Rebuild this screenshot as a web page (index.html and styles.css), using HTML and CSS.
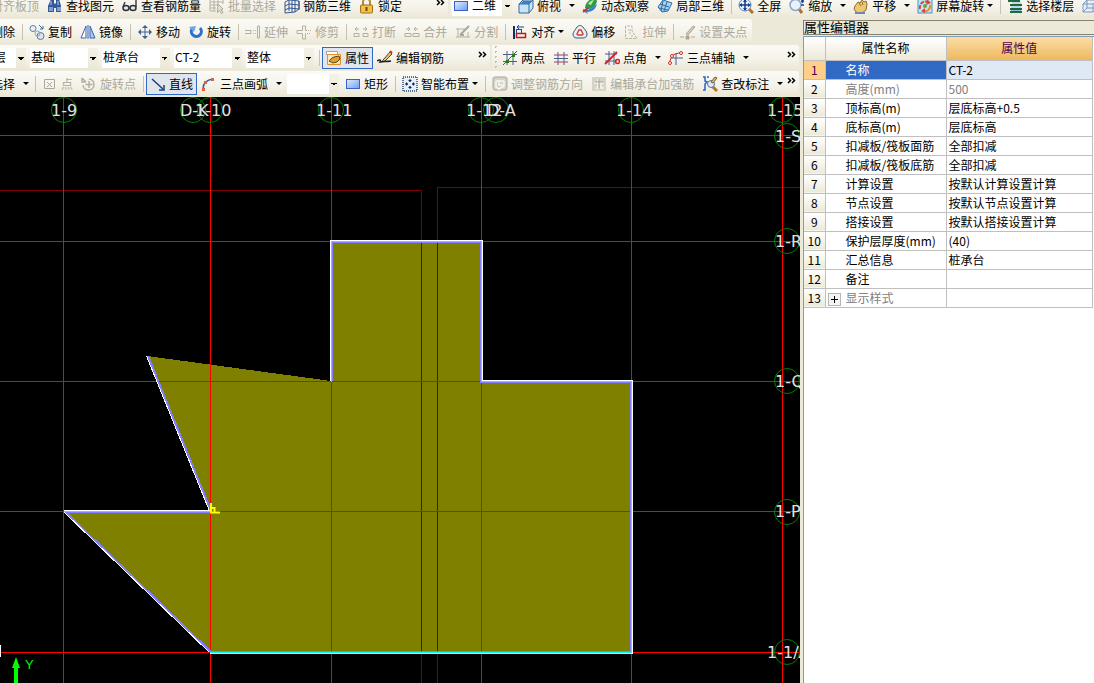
FILE: index.html
```html
<!DOCTYPE html>
<html lang="zh-CN">

<head>
    <meta charset="UTF-8">
    <meta name="viewport" content="width=device-width, initial-scale=1.0">
    <title>钢筋算量</title>
    <link rel="stylesheet" href="styles.css">
</head>

<body>
    <!-- 图标 -->
    <svg class="sprite" aria-hidden="true">
        <defs>
            <linearGradient id="blueFill" x1="0" y1="0" x2="1" y2="1">
                <stop offset="0" stop-color="#e4eeff" />
                <stop offset="1" stop-color="#6d9cf5" />
            </linearGradient>
        </defs>
        <symbol id="i-find" viewBox="0 0 16 16">
            <path d="M4 1h3v4l1 1 1-1V1h3l2 7v6H9v-4H7v4H1V8z" fill="#355a9c" />
            <path d="M2 9h4v4H2zM10 9h4v4h-4z" fill="#7f9fd0" />
            <path d="M4 3v4M11 3v4" stroke="#bcd0ee" />
        </symbol>
        <symbol id="i-look" viewBox="0 0 16 16">
            <path d="M3 4L1 9M14 2v7" stroke="#444" stroke-width="1.500" fill="none" />
            <ellipse cx="4" cy="10" rx="3" ry="2.5" fill="#dce6ee" stroke="#333" stroke-width="1.5" />
            <ellipse cx="11" cy="10" rx="3" ry="2.5" fill="#dce6ee" stroke="#333" stroke-width="1.5" />
        </symbol>
        <symbol id="i-batch" viewBox="0 0 16 16">
            <path d="M1 1h13v5M1 1v12h6M1 4h13M1 7h8M1 10h6M5 1v12M9 1v7" stroke="#b5b2a4" fill="none" />
            <path d="M9 6l5 5-2 .5 2 3-1.500 1-2-3-2 2z" fill="#e6e4da" stroke="#aaa799" />
        </symbol>
        <symbol id="i-rebar3d" viewBox="0 0 16 16">
            <path d="M1 4l4-2 10 1M1 4v11l10-1 4-3V3M1 8l4-2 10 1M1 12l4-2 10 1M5 2v11M8 3v11M11 3v11M15 3v9" stroke="#33558f" fill="none" />
        </symbol>
        <symbol id="i-lock" viewBox="0 0 16 16">
            <path d="M4 8V4a3.500 3.500 0 0 1 7 0v4" stroke="#b08a3e" stroke-width="2" fill="none" />
            <rect x="1.500" y="7" width="12" height="8" rx="1" fill="#f3bf45" stroke="#a36f18" />
            <path d="M7.500 9v4" stroke="#6e4a10" stroke-width="2" />
        </symbol>
        <symbol id="i-rect" viewBox="0 0 16 16">
            <rect x="1.500" y="3.500" width="13" height="9" fill="url(#blueFill)" stroke="#3563c6" />
        </symbol>
        <symbol id="i-cube" viewBox="0 0 16 16">
            <path d="M1 6l4-4h10v8l-4 5H1z" fill="#c7e4f6" stroke="#34699a" />
            <path d="M1 6h10v9M11 6l4-4" fill="none" stroke="#34699a" />
            <path d="M2 6l3-3h9l-3 3z" fill="#3a82b8" />
        </symbol>
        <symbol id="i-orbit" viewBox="0 0 16 16">
            <path d="M3 10C3 5 8 0 13 0c3 2 2 6-1 9-3 2-6 3-9 1z" fill="#2e9b47" />
            <path d="M6 6c2-3 4-4 6-4l-3 5z" fill="#b5ec9c" />
            <path d="M1 11c4 2 9 0 14-5-1 5-5 8-10 8l1 2-5-3z" fill="#3b78d8" />
            <path d="M1 14l5-4" stroke="#c33" stroke-width="2" />
        </symbol>
        <symbol id="i-part3d" viewBox="0 0 16 16">
            <path d="M1 9l5-7 9 3-4 8-6 1z" fill="#a9d2f2" stroke="#2f6ba7" />
            <path d="M3 6l9 3M6 3l-2 10M10 4l-3 9M2 10l9 2" stroke="#2f6ba7" fill="none" />
        </symbol>
        <symbol id="i-full" viewBox="0 0 16 16">
            <path d="M11 11l4 4" stroke="#b3702d" stroke-width="3" />
            <circle cx="7" cy="7" r="6" fill="#e3efff" stroke="#5b84bd" />
            <path d="M7 2v10M2 7h10" stroke="#1b3f8a" stroke-width="1.500" />
            <path d="M7 1l2 3H5zM7 13l2-3H5zM1 7l3-2v4zM13 7l-3-2v4z" fill="#1b3f8a" />
        </symbol>
        <symbol id="i-zoom" viewBox="0 0 16 16">
            <path d="M10 11l3 4" stroke="#b3702d" stroke-width="3" />
            <circle cx="6.500" cy="7" r="5.500" fill="#e9f2fc" stroke="#8aa6c8" stroke-width="1.500" />
            <path d="M12 3h3M12 7h3M13.500 1v4" stroke="#1b3f8a" stroke-width="1.500" />
        </symbol>
        <symbol id="i-pan" viewBox="0 0 16 16">
            <path d="M2 8l3-4 2 1 2-3 2 2 2-1 1 3-1 6-4 3H4L1 11z" fill="#f0c76e" stroke="#8e6c2d" />
            <path d="M6 5l2 3M9 4l1 3" stroke="#8e6c2d" />
            <path d="M2 15h10" stroke="#6f86b3" stroke-width="2" />
        </symbol>
        <symbol id="i-screen" viewBox="0 0 16 16">
            <rect x="1" y="1" width="14" height="14" fill="#bfe5f6" stroke="#4a91c4" />
            <path d="M3 11C2 6 6 2 11 4" stroke="#e04430" stroke-width="2" fill="none" stroke-dasharray="4 1" />
            <path d="M10 1l4 4-5 2z" fill="#e04430" />
            <path d="M13 7c1 4-3 7-6 6" stroke="#f0882c" stroke-width="2" fill="none" />
            <path d="M8 10v5l-4-2z" fill="#e04430" />
            <circle cx="8" cy="8" r="2" fill="#58a858" />
        </symbol>
        <symbol id="i-floors" viewBox="0 0 16 16">
            <path d="M1 3h12M3 7h12M3 11h12M3 14h12" stroke="#1d6b38" stroke-width="2" />
            <path d="M5 5h9M4 9h10M4 12.500h10" stroke="#8fbbe2" />
        </symbol>
        <symbol id="i-wire" viewBox="0 0 16 16">
            <path d="M1 6l4-4h10v8l-4 4H1zM1 6h10v8M11 6l4-4M5 2v8h10M5 10l-4 4" fill="#e3eefb" stroke="#7c97bd" />
        </symbol>
        <symbol id="i-delete" viewBox="0 0 16 16">
            <path d="M3 3l10 10M13 3L3 13" stroke="#c22" stroke-width="2" />
        </symbol>
        <symbol id="i-copy" viewBox="0 0 16 16">
            <circle cx="4" cy="4.500" r="3" fill="#eef2f8" stroke="#61789d" />
            <circle cx="11.500" cy="12" r="3.500" fill="#dbe4f2" stroke="#61789d" />
            <circle cx="8.500" cy="9.500" r="2.500" fill="none" stroke="#8da0bd" />
            <path d="M10 1l4 4M14 2v3h-3" stroke="#3b6ca5" fill="none" />
        </symbol>
        <symbol id="i-mirror" viewBox="0 0 16 16">
            <path d="M6 2v12H1z" fill="#fff" stroke="#3c64b2" />
            <path d="M10 2v12h5z" fill="#a9c6f5" stroke="#3c64b2" />
            <path d="M8 1v14" stroke="#3c64b2" />
        </symbol>
        <symbol id="i-move" viewBox="0 0 16 16">
            <path d="M8 2v12M2 8h12" stroke="#3d6290" />
            <path d="M8 1l3 3H5zM8 15l3-3H5zM1 8l3-3v6zM15 8l-3-3v6z" fill="#3d6290" />
        </symbol>
        <symbol id="i-rotate" viewBox="0 0 16 16">
            <path d="M12 4a5 5 0 1 1-8 1" stroke="#2e6fd2" stroke-width="3" fill="none" />
            <path d="M1 3l7-1-2 6z" fill="#6fa5ee" />
        </symbol>
        <symbol id="i-extend" viewBox="0 0 16 16">
            <path d="M0 6.500h6v3H0M8 6.500h1M8 9.500h1M10 6.500h1M10 9.500h1M12.500 2v12h2V2z" stroke="#b3b0a2" fill="none" />
        </symbol>
        <symbol id="i-trim" viewBox="0 0 16 16">
            <path d="M6.500 2v4.500H1v3h5.500V15h3V9.500M9.500 2v4.500H11M12 6.500h1M14 6.500h1M11 9.500h1M13 9.500h1M6.500 2h3" stroke="#b3b0a2" fill="none" />
        </symbol>
        <symbol id="i-break" viewBox="0 0 16 16">
            <path d="M1 9.500h5v3H1zM10 9.500h5v3h-5zM2 5h4M4 3L2 5l2 2M10 5h4M12 3l2 2-2 2" stroke="#b3b0a2" fill="none" />
        </symbol>
        <symbol id="i-merge" viewBox="0 0 16 16">
            <path d="M1 9.500h6v3H1zM9 9.500h6v3H9zM2 5h4M4 3l2 2-2 2M10 5h4M12 3l-2 2 2 2" stroke="#b3b0a2" fill="none" />
        </symbol>
        <symbol id="i-split" viewBox="0 0 16 16">
            <path d="M1 5h9M1 13h14M3 5v8M13 8v5" stroke="#b3b0a2" fill="none" />
            <path d="M5 11l9-9M5 11l4 0" stroke="#aaa799" stroke-width="2" />
        </symbol>
        <symbol id="i-align" viewBox="0 0 16 16">
            <path d="M2 2v13" stroke="#10305e" stroke-width="2" />
            <rect x="4.500" y="5.500" width="5" height="4" fill="none" stroke="#1c3fb4" />
            <rect x="4.500" y="9.500" width="9" height="4" fill="none" stroke="#c01a1a" stroke-width="1.500" />
            <path d="M12 3H5M7 1L5 3l2 2" stroke="#1c3fb4" fill="none" />
        </symbol>
        <symbol id="i-offset" viewBox="0 0 16 16">
            <path d="M5 3c2-2 4-2 6 0 1 2 4 4 4 7s-2 4-4 4H5c-3 0-4-2-4-4s3-5 4-7z" fill="#e6edf5" stroke="#385878" />
            <path d="M7 6h2l2 4-1 1H6l-1-1z" fill="#fff" stroke="#d04030" stroke-width="1.500" />
        </symbol>
        <symbol id="i-stretch" viewBox="0 0 16 16">
            <path d="M2.500 2v12.500H14L9 7V2zM5 6h3M6 9h2M8 12h2" stroke="#b9b6a9" fill="none" stroke-dasharray="3 1" />
        </symbol>
        <symbol id="i-grip" viewBox="0 0 16 16">
            <path d="M0 13h4M11 13h4M6 12h3v3H6z" stroke="#aaa799" fill="#aaa799" />
            <path d="M6 10l7-8 2 1-7 8z" fill="#d0cdc0" stroke="#aaa799" />
        </symbol>
        <symbol id="i-props" viewBox="0 0 16 16">
            <path d="M.5 1.500h11v3H.5z" fill="#fff" stroke="#a3a3a3" />
            <path d="M1.500 4.500h13v10h-13z" fill="#fbe5c4" stroke="#e98f28" />
            <path d="M3 11l3-3 2-1 5-1 1 3-3 3-4 1z" fill="#d9a62b" stroke="#5c471b" />
        </symbol>
        <symbol id="i-pen" viewBox="0 0 16 16">
            <path d="M6 10l7-8 2 2-7 7-3 1z" fill="#e7c46a" stroke="#5a4630" />
            <path d="M13 1l2 2" stroke="#c0392b" stroke-width="2" />
            <path d="M0 11c3-2 4-1 3 1 3-1 6 0 11-1" stroke="#222" stroke-width="1.500" fill="none" />
        </symbol>
        <symbol id="i-two" viewBox="0 0 16 16">
            <path d="M5 1v14M11 1v14M1 4.500h14M1 11.500h14" stroke="#4a5c92" />
            <path d="M1 15L15 1" stroke="#d02a20" />
            <path d="M4 10h3v3H4zM10 4h3v3h-3z" fill="#2b7a1c" />
        </symbol>
        <symbol id="i-parallel" viewBox="0 0 16 16">
            <path d="M5 2v13M11 2v13" stroke="#4a5c92" />
            <path d="M1 5h14M1 12h14" stroke="#a04060" />
            <path d="M1 8.500h14" stroke="#4a5c92" />
        </symbol>
        <symbol id="i-angle" viewBox="0 0 16 16">
            <path d="M5 1v14M10 1v14M1 4h12M1 11h12" stroke="#4a5c92" />
            <path d="M1 14L13 2" stroke="#e02020" stroke-width="2" />
            <circle cx="13.500" cy="11.500" r="2" fill="none" stroke="#e02020" stroke-width="1.500" />
        </symbol>
        <symbol id="i-axis3" viewBox="0 0 16 16">
            <path d="M8 3v12M3 8h12" stroke="#4a5c92" />
            <path d="M2 13c0-6 3-10 11-10" stroke="#d02a20" fill="none" />
            <circle cx="2" cy="13" r="1.500" fill="#fff" stroke="#d02a20" />
            <circle cx="4" cy="6" r="1.500" fill="#fff" stroke="#d02a20" />
            <circle cx="13" cy="3" r="1.500" fill="#fff" stroke="#d02a20" />
        </symbol>
        <symbol id="i-point" viewBox="0 0 16 16">
            <path d="M2.500 3.500h10v9h-10zM5 6l5 5M10 6l-5 5" stroke="#aaa799" fill="none" />
        </symbol>
        <symbol id="i-rotpoint" viewBox="0 0 16 16">
            <path d="M1 2v4h4M5 6L1 2M8 3a5.500 5.500 0 1 1-6 6M8 5v7M4.500 8.500h7" stroke="#b3b0a2" stroke-width="1.500" fill="none" />
        </symbol>
        <symbol id="i-line" viewBox="0 0 16 16">
            <path d="M2 3l11 10" stroke="#1c3f78" stroke-width="1.500" />
            <path d="M14 9v5H9" stroke="#1c3f78" stroke-width="1.500" fill="none" />
        </symbol>
        <symbol id="i-arc" viewBox="0 0 16 16">
            <path d="M2 13c0-5 3-9 10-10" stroke="#3a5fa0" stroke-width="1.500" fill="none" />
            <path d="M1 12h3v3H1zM3 5h3v3H3zM10 2h3v3h-3z" fill="#e0603a" />
        </symbol>
        <symbol id="i-smart" viewBox="0 0 16 16">
            <rect x="1" y="1" width="14" height="14" fill="#e6effb" stroke="#24466f" stroke-width="1.500" stroke-dasharray="1 1" />
            <path d="M8 3v3M8 10v3M3 8h3M10 8h3" stroke="#102c50" />
            <path d="M6 4h4L8 6zM6 12h4l-2-2zM4 6v4l2-2zM12 6v4l-2-2z" fill="#102c50" />
        </symbol>
        <symbol id="i-dir" viewBox="0 0 16 16">
            <rect x="1" y="1" width="14" height="13" rx="2" fill="#d6d3c7" stroke="#aaa799" />
            <path d="M4 5h8M4 5v6l3 2 5-3V5M7 5v4h4" stroke="#f8f7f1" stroke-width="1.500" fill="none" />
        </symbol>
        <symbol id="i-strong" viewBox="0 0 16 16">
            <rect x="1" y="1" width="14" height="14" fill="#d6d3c7" />
            <path d="M7 3v8l-2 2M3 7h10M10 8v4h3" stroke="#f8f7f1" stroke-width="1.500" fill="none" />
            <path d="M8 3v9M4 6h9" stroke="#aaa799" />
        </symbol>
        <symbol id="i-check" viewBox="0 0 16 16">
            <path d="M1 1h2v4l2 1-2 2v6H1M5 1h2" stroke="#2b62c0" stroke-width="1.500" fill="none" />
            <path d="M10 10l5 5" stroke="#b5722c" stroke-width="3" />
            <circle cx="9" cy="8" r="3.500" fill="#dbeaf8" stroke="#58759c" />
            <path d="M9 6l4-5 2 1-4 5z" fill="#e9bc55" stroke="#7b5b20" />
        </symbol>
        <symbol id="i-more" viewBox="0 0 9 7">
            <path d="M1 1l2.500 2.500L1 6M5 1l2.500 2.500L5 6" stroke="#000" stroke-width="1.500" fill="none" />
        </symbol>
    </svg>

    <!-- 第一行工具栏 -->
    <div class="bar-row top-row">
        <div class="toolbar scrolled">
            <button class="tool" disabled><svg><use href="#i-align" /></svg>对齐板顶</button>
            <button class="tool"><svg><use href="#i-find" /></svg>查找图元</button>
            <button class="tool"><svg><use href="#i-look" /></svg>查看钢筋量</button>
            <button class="tool" disabled><svg><use href="#i-batch" /></svg>批量选择</button>
            <button class="tool"><svg><use href="#i-rebar3d" /></svg>钢筋三维</button>
            <button class="tool"><svg><use href="#i-lock" /></svg>锁定</button>
            <button class="more" aria-label="更多"><svg><use href="#i-more" /></svg></button>
        </div>
        <div class="toolbar">
            <div class="view-box">
                <svg><use href="#i-rect" /></svg>
                <select class="combo view" aria-label="视图"><option>二维</option></select>
            </div>
            <button class="tool"><svg><use href="#i-cube" /></svg>俯视</button>
            <button class="drop" aria-label="俯视选项"></button>
            <button class="tool"><svg><use href="#i-orbit" /></svg>动态观察</button>
            <button class="tool"><svg><use href="#i-part3d" /></svg>局部三维</button>
            <span class="sep"></span>
            <button class="tool"><svg><use href="#i-full" /></svg>全屏</button>
            <button class="tool"><svg><use href="#i-zoom" /></svg>缩放</button>
            <button class="drop" aria-label="缩放选项"></button>
            <button class="tool"><svg><use href="#i-pan" /></svg>平移</button>
            <button class="drop" aria-label="平移选项"></button>
            <button class="tool has-arrow"><svg><use href="#i-screen" /></svg>屏幕旋转</button>
            <span class="sep"></span>
            <button class="tool"><svg><use href="#i-floors" /></svg>选择楼层</button>
            <button class="tool" aria-label="线框"><svg><use href="#i-wire" /></svg></button>
        </div>
    </div>

    <div class="workspace">
        <main>
            <!-- 修改工具栏 -->
            <div class="bar-row">
                <div class="toolbar scrolled">
                    <button class="tool"><svg><use href="#i-delete" /></svg>删除</button>
                    <span class="sep"></span>
                    <button class="tool"><svg><use href="#i-copy" /></svg>复制</button>
                    <button class="tool"><svg><use href="#i-mirror" /></svg>镜像</button>
                    <span class="sep"></span>
                    <button class="tool"><svg><use href="#i-move" /></svg>移动</button>
                    <button class="tool"><svg><use href="#i-rotate" /></svg>旋转</button>
                    <span class="sep"></span>
                    <button class="tool" disabled><svg><use href="#i-extend" /></svg>延伸</button>
                    <button class="tool" disabled><svg><use href="#i-trim" /></svg>修剪</button>
                    <span class="sep"></span>
                    <button class="tool" disabled><svg><use href="#i-break" /></svg>打断</button>
                    <button class="tool" disabled><svg><use href="#i-merge" /></svg>合并</button>
                    <button class="tool" disabled><svg><use href="#i-split" /></svg>分割</button>
                    <span class="sep"></span>
                    <button class="tool has-arrow"><svg><use href="#i-align" /></svg>对齐</button>
                    <button class="tool"><svg><use href="#i-offset" /></svg>偏移</button>
                    <button class="tool" disabled><svg><use href="#i-stretch" /></svg>拉伸</button>
                    <span class="sep"></span>
                    <button class="tool" disabled><svg><use href="#i-grip" /></svg>设置夹点</button>
                </div>
            </div>

            <!-- 构件选择 -->
            <div class="bar-row">
                <div class="toolbar combos">
                    <select class="combo floor" aria-label="楼层"><option>基础层</option></select>
                    <select class="combo" aria-label="构件类型"><option>基础</option></select>
                    <select class="combo" aria-label="构件"><option>桩承台</option></select>
                    <select class="combo" aria-label="构件名称"><option>CT-2</option></select>
                    <select class="combo" aria-label="单元"><option>整体</option></select>
                    <span class="sep"></span>
                    <button class="tool active"><svg><use href="#i-props" /></svg>属性</button>
                    <button class="tool"><svg><use href="#i-pen" /></svg>编辑钢筋</button>
                    <button class="more" aria-label="更多"><svg><use href="#i-more" /></svg></button>
                </div>
                <div class="toolbar grow grip">
                    <button class="tool"><svg><use href="#i-two" /></svg>两点</button>
                    <button class="tool"><svg><use href="#i-parallel" /></svg>平行</button>
                    <button class="tool"><svg><use href="#i-angle" /></svg>点角</button>
                    <button class="drop" aria-label="点角选项"></button>
                    <button class="tool"><svg><use href="#i-axis3" /></svg>三点辅轴</button>
                    <button class="drop" aria-label="三点辅轴选项"></button>
                    <button class="more" aria-label="更多"><svg><use href="#i-more" /></svg></button>
                </div>
            </div>

            <!-- 绘图工具栏 -->
            <div class="bar-row">
                <div class="toolbar scrolled grow">
                    <button class="tool"><svg><use href="#i-line" /></svg>选择</button>
                    <button class="drop" aria-label="选择选项"></button>
                    <span class="sep"></span>
                    <button class="tool" disabled><svg><use href="#i-point" /></svg>点</button>
                    <button class="tool" disabled><svg><use href="#i-rotpoint" /></svg>旋转点</button>
                    <span class="sep"></span>
                    <button class="tool active"><svg><use href="#i-line" /></svg>直线</button>
                    <button class="tool"><svg><use href="#i-arc" /></svg>三点画弧</button>
                    <button class="drop" aria-label="画弧选项"></button>
                    <select class="combo short" aria-label="画弧参数"><option></option></select>
                    <button class="tool"><svg><use href="#i-rect" /></svg>矩形</button>
                    <span class="sep"></span>
                    <button class="tool has-arrow"><svg><use href="#i-smart" /></svg>智能布置</button>
                    <span class="sep"></span>
                    <button class="tool" disabled><svg><use href="#i-dir" /></svg>调整钢筋方向</button>
                    <button class="tool" disabled><svg><use href="#i-strong" /></svg>编辑承台加强筋</button>
                    <button class="tool"><svg><use href="#i-check" /></svg>查改标注</button>
                    <button class="drop" aria-label="标注选项"></button>
                    <button class="more" aria-label="更多"><svg><use href="#i-more" /></svg></button>
                </div>
            </div>

            <!-- 绘图区 -->
            <svg class="drawing" viewBox="0 97 800 586" preserveAspectRatio="xMinYMin slice">
                <polygon class="slab" points="64,512 210,512 147,356 331,381 331,241 482,241 482,381 632,381 632,653 210,653" />

                <path class="sub-axis" d="M0 190.500H421.500V683M800 187.500H437.500V683" />
                <path class="axis" d="M63.500 97V683M210.500 97V683M331.500 97V683M481.500 97V683M631.500 97V683M782.500 97V683" />
                <path class="axis" d="M0 135.500H800M0 241.500H800M0 381.500H800M0 511.500H800M0 652.500H800" />

                <!-- 承台边线 -->
                <path class="edge inner" d="M64 512.500H210M332.500 381V242.500H480.500V382.500H630.500V651.500H210" />
                <path class="edge inner slope" d="M148 356L211 511M65.500 512L210.500 651.500" />
                <path class="edge mid" d="M64 511.500H210M331.500 382V241.500H481.500V381.500H631.500V652.500H210" />
                <path class="edge outer" d="M64 510.500H210M330.500 381V240.500H482.500V380.500H632.500V653.500H210" />
                <path class="edge outer" d="M146.500 356L209.500 511M64.500 512.500L209.500 652.500" />

                <g class="bubble">
                    <circle cx="64" cy="110" r="12.500" />
                    <circle cx="193" cy="110" r="12.500" />
                    <circle cx="210" cy="110" r="12.500" />
                    <circle cx="331" cy="110" r="12.500" />
                    <circle cx="481" cy="110" r="12.500" />
                    <circle cx="496" cy="110" r="12.500" />
                    <circle cx="631" cy="110" r="12.500" />
                    <circle cx="782" cy="110" r="12.500" />
                    <circle cx="787" cy="136" r="12.500" />
                    <circle cx="787" cy="241" r="12.500" />
                    <circle cx="787" cy="381" r="12.500" />
                    <circle cx="787" cy="512" r="12.500" />
                    <circle cx="787" cy="652" r="12.500" />
                </g>
                <g class="axis-name">
                    <text x="51" y="116">1-9</text>
                    <text x="180" y="116">D-K</text>
                    <text x="195" y="116">1-10</text>
                    <text x="316" y="116">1-11</text>
                    <text x="466" y="116">1-12</text>
                    <text x="487" y="116">D-A</text>
                    <text x="616" y="116">1-14</text>
                    <text x="767" y="116">1-15</text>
                    <text x="775" y="142">1-S</text>
                    <text x="775" y="247">1-R</text>
                    <text x="775" y="387">1-Q</text>
                    <text x="775" y="517">1-P</text>
                    <text x="767" y="658">1-1/A</text>
                </g>
                <path d="M0 645h1v12H0z" fill="#fff" />

                <!-- 插入点和坐标轴 -->
                <path d="M211 503V513M212 508H214.500V512M210 512.500H220" stroke="#ff0" stroke-width="2" fill="none" />
                <path d="M16 657l4 11h-2v15h-4v-15h-2z" fill="#0f0" />
                <text class="ucs" x="25" y="669">Y</text>
            </svg>
        </main>

        <!-- 属性编辑器 -->
        <aside>
            <h2>属性编辑器</h2>
            <div class="sheet">
                <table>
                    <thead>
                        <tr><th class="no"></th><th>属性名称</th><th class="current">属性值</th></tr>
                    </thead>
                    <tbody>
                        <tr class="selected"><th>1</th><td>名称</td><td>CT-2</td></tr>
                        <tr class="locked"><th>2</th><td>高度(mm)</td><td>500</td></tr>
                        <tr><th>3</th><td>顶标高(m)</td><td>层底标高+0.5</td></tr>
                        <tr><th>4</th><td>底标高(m)</td><td>层底标高</td></tr>
                        <tr><th>5</th><td>扣减板/筏板面筋</td><td>全部扣减</td></tr>
                        <tr><th>6</th><td>扣减板/筏板底筋</td><td>全部扣减</td></tr>
                        <tr><th>7</th><td>计算设置</td><td>按默认计算设置计算</td></tr>
                        <tr><th>8</th><td>节点设置</td><td>按默认节点设置计算</td></tr>
                        <tr><th>9</th><td>搭接设置</td><td>按默认搭接设置计算</td></tr>
                        <tr><th>10</th><td>保护层厚度(mm)</td><td>(40)</td></tr>
                        <tr><th>11</th><td>汇总信息</td><td>桩承台</td></tr>
                        <tr><th>12</th><td>备注</td><td></td></tr>
                        <tr class="locked group"><th>13</th><td><button class="expand" aria-label="展开"></button>显示样式</td><td></td></tr>
                    </tbody>
                </table>
            </div>
        </aside>
    </div>
</body>

</html>
```
FILE: styles.css
```css
* {
    box-sizing: border-box;
}

body {
    display: flex;
    flex-direction: column;
    height: 100vh;
    margin: 0;
    overflow: hidden;
    background-color: #ece9d8;
    color: #000;
    font-family: "Noto Sans CJK SC", sans-serif;
    font-size: 12px;
    line-height: 16px;
}

button,
select {
    font: inherit;
    color: inherit;
}

.sprite {
    position: absolute;
    width: 0;
    height: 0;
}

/* 工具栏 */
.bar-row {
    display: flex;
    gap: 2px;
    flex: none;
    height: 26px;
    overflow: hidden;
}

.top-row {
    margin-top: -7px;
}

.toolbar {
    display: flex;
    align-items: center;
    flex: none;
    height: 25px;
    padding-right: 1px;
    background: linear-gradient(#fbfaf6, #f4f2e8 60%, #ebe7d7);
    border-radius: 0 3px 3px 0;
}

.toolbar.scrolled {
    margin-left: -32px;
}

.toolbar.combos {
    margin-left: -44px;
}

.toolbar.grow {
    flex: 1;
    margin-right: 4px;
}

.toolbar.grip {
    padding-left: 6px;
    background: radial-gradient(circle, #c1beb0 1px, transparent 1px) 1px 4px / 5px 5px repeat-y,
        linear-gradient(#fbfaf6, #f4f2e8 60%, #ebe7d7);
}

.tool {
    display: flex;
    align-items: center;
    flex: none;
    gap: 3px;
    height: 22px;
    padding: 0 4px;
    border: 0;
    background: none;
    white-space: nowrap;
}

.tool svg {
    width: 16px;
    height: 16px;
}

.tool:disabled {
    color: #aca899;
}

.tool.active {
    background-color: #e1e6ec;
    box-shadow: inset 0 0 0 1px #316ac5;
}

.has-arrow::after,
.drop::after {
    content: "";
    border: 3px solid transparent;
    border-width: 3px 3px 0;
    border-top-color: #000;
}

.drop {
    display: flex;
    align-items: center;
    justify-content: center;
    flex: none;
    width: 13px;
    height: 22px;
    padding: 0;
    border: 0;
    background: none;
}

.more {
    align-self: flex-start;
    flex: none;
    margin: 6px 0 0 auto;
    padding: 0 2px 0 30px;
    border: 0;
    background: none;
    line-height: 0;
}

.scrolled.grow .more {
    padding-left: 0;
}

.more svg {
    width: 9px;
    height: 7px;
}

.sep {
    flex: none;
    width: 1px;
    height: 16px;
    margin: 0 2px 0 3px;
    background-color: #c5c2b4;
}

.combo {
    flex: none;
    width: 68px;
    height: 20px;
    margin: 0 2px;
    padding: 0 12px 2px 1px;
    border: 0;
    appearance: none;
    background: linear-gradient(45deg, transparent 50%, #000 50%) right 5px top 9px / 3px 3px no-repeat,
        linear-gradient(315deg, transparent 50%, #000 50%) right 2px top 9px / 3px 3px no-repeat,
        linear-gradient(#f4f2e8, #ece9d8) right / 10px 100% no-repeat,
        #fff;
}

.combo.floor {
    padding-left: 12px;
}

.combo.short {
    width: 52px;
}

.view-box {
    display: flex;
    align-items: center;
    width: 60px;
    height: 20px;
    margin: 0 2px;
    background-color: #fff;
}

.view-box svg {
    flex: none;
    width: 16px;
    height: 16px;
    margin-left: 1px;
}

.combo.view {
    width: 43px;
    margin: 0;
    padding-left: 3px;
}

/* 工作区 */
.workspace {
    display: flex;
    flex: 1;
    min-height: 0;
}

main {
    display: flex;
    flex-direction: column;
    flex: 1;
    min-width: 0;
}

.drawing {
    flex: 1;
    min-height: 0;
    margin-right: 3px;
    background-color: #000;
}

.slab {
    fill: #808000;
    shape-rendering: crispEdges;
}

.axis,
.sub-axis,
.edge {
    fill: none;
    shape-rendering: crispEdges;
}

.axis {
    stroke: #f00;
}

.sub-axis {
    stroke: #800000;
}

.edge.inner {
    stroke: #8080ff;
}

.edge.slope {
    stroke-width: 2px;
}

.edge.mid {
    stroke: #0ff;
}

.edge.outer {
    stroke: #fff;
}

.bubble {
    fill: none;
    stroke: #008000;
}

.axis-name {
    fill: #e0e0e0;
    font-family: "DejaVu Sans", sans-serif;
    font-size: 16px;
}

.ucs {
    fill: #0f0;
    font-family: "Liberation Sans", sans-serif;
    font-size: 13px;
}

/* 属性编辑器 */
aside {
    display: flex;
    flex-direction: column;
    flex: none;
    width: 291px;
    padding-top: 1px;
}

aside h2 {
    height: 15px;
    margin: 0;
    border: 1px solid #85836f;
    border-width: 1px 0 1px 1px;
    font-size: 13px;
    font-weight: normal;
    line-height: 12px;
}

.sheet {
    flex: 1;
    margin-top: 1px;
    border: 1px solid #7f9db9;
    border-width: 1px 0 0 1px;
    background-color: #fff;
}

table {
    width: 289px;
    border-collapse: collapse;
    table-layout: fixed;
}

th,
td {
    height: 19px;
    padding: 0 2px;
    border: 1px solid #c0c0c0;
    border-width: 0 1px 1px 0;
    line-height: 16px;
    text-align: left;
    white-space: nowrap;
}

th {
    padding: 0;
    background: linear-gradient(#fff, #ece9d8);
    font-weight: normal;
    text-align: center;
}

thead th {
    height: 23px;
}

th.no {
    width: 21px;
}

thead th:nth-child(2) {
    width: 121px;
}

th.current {
    background: linear-gradient(#fbdca6, #eeb95d);
    color: #500050;
}

td:nth-child(2) {
    padding-left: 20px;
}

.selected th {
    background: #ffcf87;
    color: #500050;
}

.selected td {
    background-color: #dfe8f5;
}

.selected td:nth-child(2) {
    background-color: #316ac5;
    color: #fff;
}

.locked td {
    color: #808080;
}

.group td:nth-child(2) {
    padding-left: 2px;
}

.expand {
    width: 13px;
    height: 13px;
    margin: 0 5px 0 0;
    padding: 0;
    border: 1px solid #b5b5b5;
    vertical-align: -2px;
    background: linear-gradient(#000, #000) center / 7px 1px no-repeat,
        linear-gradient(#000, #000) center / 1px 7px no-repeat,
        #f4f4f4;
}
```
